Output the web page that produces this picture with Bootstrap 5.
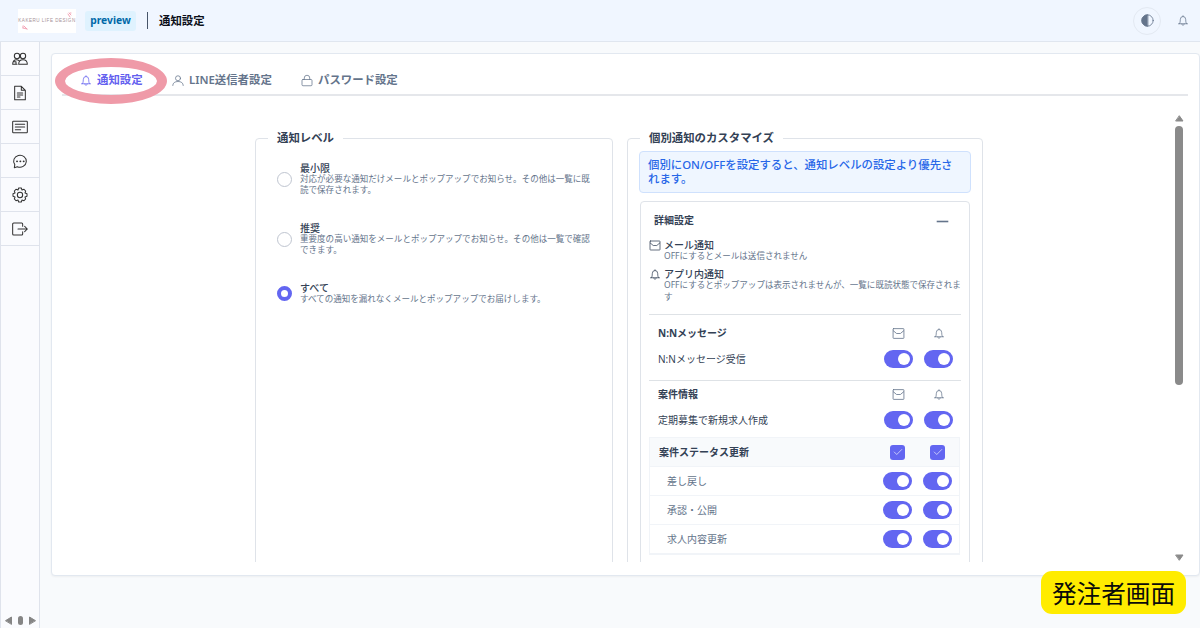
<!DOCTYPE html>
<html lang="ja">
<head>
<meta charset="utf-8">
<meta name="viewport" content="width=device-width, initial-scale=1">
<title>通知設定</title>
<link rel="stylesheet" href="https://cdn.jsdelivr.net/npm/bootstrap@5.3.0/dist/css/bootstrap.min.css">
<style>
body{font-family:"Noto Sans","Noto Sans CJK JP",sans-serif;font-size:10px;line-height:14px;color:#334155;background:#f8fafc;height:628px;overflow:hidden}
svg{display:block;flex:none;fill:none;stroke:currentColor;stroke-width:1.5;stroke-linecap:round;stroke-linejoin:round}
.topbar{height:42px;background:#f0f6ff;border-bottom:1px solid #e0e6ef;padding:0 11px 0 18px}
.brand{width:58px;height:24px;background:#fff;font:4.6px/24px "Liberation Sans",sans-serif;letter-spacing:.48px;color:#a79298;text-align:center;white-space:nowrap}
.brand svg{position:absolute;inset:0}
.env{width:51px;height:20px;margin-left:9px;background:#dff2fe;color:#0069a8;font-size:10.3px;line-height:19px;border-radius:3px}
.divider{width:1px;height:17px;background:#475569;margin:0 11px}
.page-title{font-size:11.4px;color:#0b0f19}
.round{width:28px;height:28px;border:1px solid #e3e9f2;border-radius:50%;color:#64748b}
.side{width:40px;border:solid #dfe3ec;border-width:0 1px;background:#fafbfe;color:#333}
.side a{height:34px;border-bottom:1px solid #dfe3ec;color:inherit;flex:none}
.side svg{stroke-width:1.55}
.hscroll{gap:6px;color:#858585;padding-bottom:3px}
.hscroll svg,.vscroll svg{fill:currentColor;stroke-width:1}
.hscroll i{width:5px;height:9px;background:#858585;border-radius:3px}
.panel{margin:11px 0 0 11px;height:523px;background:#fff;border:1px solid #e2e8f0;border-radius:4px;box-shadow:0 1px 2px #0000000c}
.tabs{height:42px;margin:0 11px 0 10px;border-bottom:2px solid #e5e7eb;padding:11px 0 0 18px;font-size:11.4px;font-weight:600;color:#64748b}
.tabs>div{height:30px;gap:5px}
.tabs .on{color:#6360ef;width:92px}
.tabs .line{width:129px}
.ring{left:3px;top:4px;width:112px;height:46px;border:10px solid #ef9aa8;border-width:9px 10px;border-radius:50%}
.viewport-area{height:466px;overflow:hidden;padding:35px 0 0 203px;gap:14px}
.group{width:358px;height:440px;border:1px solid #dfe3e9;border-width:1.5px;border-radius:4px;padding:0 11px;margin-top:7px}
.group.second{width:356px}
.group h2{width:max-content;background:#fff;font-size:11.4px;line-height:16px;font-weight:700;margin:-9px 0 0 1px;padding:0 9px;color:#334155}
.opt{margin-left:10px;gap:8px}
.opt+.opt{margin-top:25px}
.opt b,.lg b{font-weight:500;display:block;line-height:12px}
.opt p,.lg p{margin:0;font-size:8.54px;line-height:11.4px;color:#64748b;white-space:nowrap}
.dot{width:15px;height:15px;border:1px solid #bfc5d0;border-radius:50%;flex:none}
.dot.on{border:4px solid #6366f1}
.note{margin:5px -1px 8px 0;height:42px;width:332px;background:#eff6ff;border:1px solid #cfe1fd;border-radius:4px;padding:6px 8px;color:#2767e8;font-size:11.4px;line-height:14px;font-weight:500;white-space:nowrap}
.group.second .inner{width:330px;height:400px;border:1px solid #dfe3e9;border-radius:4px;padding:0 8px;margin-left:1px}
.inner h3{font-size:10px;line-height:14px;font-weight:700;margin:0;padding:11px 13px 0 5px;height:37px}
.minus{width:11px;height:1px;background:#64748b;box-shadow:0 0 0 .3px #64748b}
.lg{gap:3px}
.lg svg{margin-top:0}
.heads{font-weight:700;height:26px}
.line-row{height:26px}
.cells{padding:0 8px 0 9px}
.acts{gap:11px;color:#64748b}
.acts>*{width:29px;display:flex;justify-content:center}
.tg{height:18px;border-radius:9px;background:#6366f1;padding:3px;justify-content:flex-end!important}
.tg::after{content:"";width:12px;height:12px;border-radius:50%;background:#fff}
.ck i{width:15px;height:15px;border-radius:3px;background:#6366f1;color:#fff}
.subs{border:1px solid #f1f4f8;margin-right:1px}
.subs .cells{height:29px;border-bottom:1px solid #f1f4f8;padding-right:7px}
.subs .cells:not(:first-child){color:#64748b;padding-left:17px}
.subs .cells:first-child{background:#f8fafc;font-weight:600}
.vscroll{right:15px;top:61px;height:446px;width:10px;color:#8a8a8a}
.vscroll i{width:8px;height:259px;background:#8a8a8a;border-radius:4px;margin-top:4px}
.stamp{right:14px;bottom:14px;width:145px;height:43px;border-radius:11px;background:#ffec00;color:#0a0a0a;font-family:"Noto Sans CJK JP",sans-serif;font-size:24.6px;line-height:42px;font-weight:400}
</style>
</head>
<body>
<svg width="0" height="0" class="position-absolute">
<symbol id="bell" viewBox="0 0 24 24"><path d="M3 18.5h18M5 18.5c1.2-2 1.5-4 1.5-8a5.5 6.5 0 0 1 11 0c0 4 .3 6 1.5 8M9.5 19c.3 3.5 4.700 3.500 5 0M12 4V2.500"/></symbol>
<symbol id="mail" viewBox="0 0 24 24"><rect x="2" y="3" width="20" height="18" rx="1"/><path d="M2.500 7l6 5h7l6-5"/></symbol>
<symbol id="check" viewBox="0 0 24 24"><path d="M3 12l6 6L21 6"/></symbol>
</svg>

<header class="topbar d-flex align-items-center">
  <div class="brand position-relative">KAKERU LIFE DESIGN
    <svg width="58" height="24" stroke="#f3a4b4"><path stroke="#f29caf" stroke-width=".9" d="M5 17v2M5 19l4 1M6 17l3 3M51 4l2 2M52 4h1M50 5l2 3"/></svg>
  </div>
  <span class="env fw-bold text-center">preview</span>
  <span class="divider"></span>
  <span class="page-title fw-bold">通知設定</span>
  <span class="round d-flex align-items-center justify-content-center ms-auto"><svg width="13" height="13" viewBox="0 0 24 24"><circle cx="12" cy="12" r="10.500"/><path fill="currentColor" d="M12 1.500a10.500 10.500 0 0 0 0 21z"/></svg></span>
  <svg class="ms-3" style="color:#64748b" width="12" height="13"><use href="#bell"/></svg>
</header>

<div class="d-flex" style="height:586px">
  <nav class="side d-flex flex-column">
    <a class="d-flex align-items-center justify-content-center"><svg width="16" height="16" viewBox="0 0 24 24"><circle cx="7.500" cy="7.500" r="4"/><circle cx="16.500" cy="7.500" r="4"/><path d="M1 20c0-4 2.500-7 6-7 1.500 0 2.500.5 3.500 1.500M1 20h6.500M3 16h3v4M10 20c0-4 2.500-7 6.500-7s6.500 3 6.500 7z"/></svg></a>
    <a class="d-flex align-items-center justify-content-center"><svg width="16" height="16" viewBox="0 0 24 24"><path d="M4 2h10l6 6v14H4zM14 2v6h6M8 12h8M8 15h8M8 18h4"/></svg></a>
    <a class="d-flex align-items-center justify-content-center"><svg width="16" height="16" viewBox="0 0 24 24"><rect x="1" y="3.500" width="22" height="17" rx="1"/><path d="M5 8h14M5 12h14M5 16h8"/></svg></a>
    <a class="d-flex align-items-center justify-content-center"><svg width="16" height="16" viewBox="0 0 24 24"><path d="M3.500 22l.7-4.500A9.500 9 0 1 1 8 20.500z"/><path stroke-width="2.800" d="M7.500 12.500h.1M12.500 12.500h.1M17.500 12.500h.1"/></svg></a>
    <a class="d-flex align-items-center justify-content-center"><svg width="16" height="16" viewBox="0 0 24 24"><circle cx="12" cy="12" r="4"/><path d="M10 1.500h4l1 3 3-1 2.500 2.500-1 3 3 1v4l-3 1 1 3-2.500 2.500-3-1-1 3h-4l-1-3-3 1L3.500 18l1-3-3-1v-4l3-1-1-3L6 3.500l3 1z"/></svg></a>
    <a class="d-flex align-items-center justify-content-center"><svg width="16" height="16" viewBox="0 0 24 24"><path d="M16 8V4.500Q16 3 14.500 3h-12Q1 3 1 4.500v15Q1 21 2.500 21h12q1.500 0 1.500-1.500V16M9 12h14M19 8l4 4-4 4"/></svg></a>
    <div class="hscroll d-flex align-items-center justify-content-center mt-auto">
      <svg width="7" height="9" viewBox="0 0 7 9"><path d="M.8 4.500L6.500 1v7z"/></svg><i></i><svg width="7" height="9" viewBox="0 0 7 9"><path d="M6.200 4.500L.5 1v7z"/></svg>
    </div>
  </nav>

  <main class="panel flex-grow-1 position-relative">
    <div class="tabs d-flex">
      <div class="on d-flex align-items-center"><svg width="12" height="13"><use href="#bell"/></svg>通知設定</div>
      <div class="line d-flex align-items-center"><svg width="12" height="13" viewBox="0 0 24 24"><circle cx="12" cy="7.500" r="5"/><path d="M1.500 22c0-5.500 4.500-8 10.500-8s10.500 2.500 10.500 8"/></svg>LINE送信者設定</div>
      <div class="d-flex align-items-center"><svg width="12" height="13" viewBox="0 0 24 24"><rect x="2" y="10" width="20" height="12.500" rx="2"/><path d="M6.500 10V7a5.500 5.500 0 0 1 11 0v3"/></svg>パスワード設定</div>
    </div>
    <span class="ring position-absolute"></span>

    <div class="viewport-area d-flex">
      <section class="group">
        <h2>通知レベル</h2>
        <div class="pt-3">
          <div class="opt d-flex align-items-center"><span class="dot"></span><div><b>最小限</b><p>対応が必要な通知だけメールとポップアップでお知らせ。その他は一覧に既<br>読で保存されます。</p></div></div>
          <div class="opt d-flex align-items-center"><span class="dot"></span><div><b>推奨</b><p>重要度の高い通知をメールとポップアップでお知らせ。その他は一覧で確認<br>できます。</p></div></div>
          <div class="opt d-flex align-items-center"><span class="dot on"></span><div><b>すべて</b><p>すべての通知を漏れなくメールとポップアップでお届けします。</p></div></div>
        </div>
      </section>

      <section class="group second">
        <h2>個別通知のカスタマイズ</h2>
        <div class="note">個別にON/OFFを設定すると、通知レベルの設定より優先さ<br>れます。</div>
        <div class="inner">
          <h3 class="d-flex justify-content-between">詳細設定<span class="minus mt-2"></span></h3>
          <div class="lg d-flex"><svg width="12" height="13"><use href="#mail"/></svg><div><b>メール通知</b><p>OFFにするとメールは送信されません</p></div></div>
          <div class="lg d-flex" style="margin-top:6px"><svg width="12" height="13"><use href="#bell"/></svg><div><b>アプリ内通知</b><p>OFFにするとポップアップは表示されませんが、一覧に既読状態で保存されま<br>す</p></div></div>
          <div class="border-top" style="margin-top:11px;padding-top:5px;height:66px">
            <div class="cells heads d-flex align-items-center justify-content-between">N:Nメッセージ<div class="acts d-flex"><span><svg width="13" height="13"><use href="#mail"/></svg></span><span><svg width="12" height="13"><use href="#bell"/></svg></span></div></div>
            <div class="cells line-row d-flex align-items-center justify-content-between">N:Nメッセージ受信<div class="acts d-flex"><span class="tg"></span><span class="tg"></span></div></div>
          </div>
          <div class="border-top" style="height:57px">
            <div class="cells heads d-flex align-items-center justify-content-between">案件情報<div class="acts d-flex"><span><svg width="13" height="13"><use href="#mail"/></svg></span><span><svg width="12" height="13"><use href="#bell"/></svg></span></div></div>
            <div class="cells line-row d-flex align-items-center justify-content-between">定期募集で新規求人作成<div class="acts d-flex"><span class="tg"></span><span class="tg"></span></div></div>
          </div>
          <div class="subs">
            <div class="cells d-flex align-items-center justify-content-between">案件ステータス更新<div class="acts d-flex"><span class="ck"><i class="d-flex align-items-center justify-content-center"><svg width="10" height="10"><use href="#check"/></svg></i></span><span class="ck"><i class="d-flex align-items-center justify-content-center"><svg width="10" height="10"><use href="#check"/></svg></i></span></div></div>
            <div class="cells d-flex align-items-center justify-content-between">差し戻し<div class="acts d-flex"><span class="tg"></span><span class="tg"></span></div></div>
            <div class="cells d-flex align-items-center justify-content-between">承認・公開<div class="acts d-flex"><span class="tg"></span><span class="tg"></span></div></div>
            <div class="cells d-flex align-items-center justify-content-between">求人内容更新<div class="acts d-flex"><span class="tg"></span><span class="tg"></span></div></div>
          </div>
        </div>
      </section>
    </div>

    <div class="vscroll position-absolute d-flex flex-column align-items-center">
      <svg width="9" height="7" viewBox="0 0 9 7"><path d="M4.500 1L8 6H1z"/></svg><i></i><svg class="mt-auto" width="9" height="7" viewBox="0 0 9 7"><path d="M4.500 6L8 1H1z"/></svg>
    </div>
  </main>
</div>
<div class="stamp position-absolute text-center">発注者画面</div>
<script src="https://cdn.jsdelivr.net/npm/bootstrap@5.3.0/dist/js/bootstrap.bundle.min.js"></script>
</body>
</html>
